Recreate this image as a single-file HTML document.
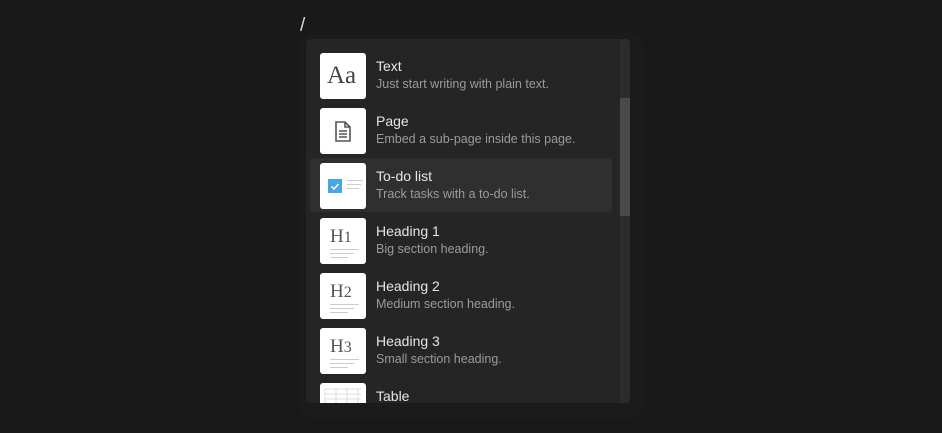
<!DOCTYPE html>
<html><head><style>
body{margin:0;width:942px;height:433px;background:#191919;font-family:"Liberation Sans",sans-serif;overflow:hidden;position:relative}
.slash{position:absolute;left:300px;top:15px;color:#d8d8d8;font-size:19px}
.glow{position:absolute;left:298px;top:33px;width:346px;height:386px;border-radius:16px;background:#1b1b1b}
.menu{position:absolute;left:306px;top:39px;width:324px;height:364px;background:#252525;border-radius:4px;overflow:hidden}
.track{position:absolute;right:0;top:0;width:10px;height:100%;background:#2c2c2c}
.thumb{position:absolute;right:0;top:59px;width:10px;height:118px;background:#4a4a4c}
.row{position:absolute;left:4px;width:302px;height:54px;border-radius:4px}
.row.hl{background:#2f2f2f}
.ic{position:absolute;left:10px;top:5px;width:46px;height:46px;background:#fff;border-radius:3px;overflow:hidden}
.t{position:absolute;left:66px;top:10px;color:#e6e6e6;font-size:14px}
.d{position:absolute;left:66px;top:29px;color:#9b9b9b;font-size:12.5px}
.h{position:absolute;left:10px;top:8px;font-family:"Liberation Serif",serif;font-size:19px;color:#555}
.l{position:absolute;left:10px;height:1px;background:#ccc}
</style></head><body>
<div class="slash">/</div>
<div class="glow"></div>
<div class="menu">
<div class="track"></div><div class="thumb"></div>
<div class="row" style="top:9px"><div class="ic"><div style="position:absolute;left:7px;top:9px;font-family:'Liberation Serif',serif;font-size:25px;color:#444">Aa</div></div><div class="t">Text</div><div class="d">Just start writing with plain text.</div></div>
<div class="row" style="top:64px"><div class="ic"><svg width="46" height="46" viewBox="0 0 46 46"><path d="M16 14h9l5 5v14H16z M25 14v5h5" fill="none" stroke="#555" stroke-width="1.6"/><path d="M19 23h8M19 26h8M19 29h8" stroke="#555" stroke-width="1.4"/></svg></div><div class="t">Page</div><div class="d">Embed a sub-page inside this page.</div></div>
<div class="row hl" style="top:119px"><div class="ic"><div style="position:absolute;left:8px;top:16px;width:14px;height:14px;background:#4aa5e0"></div><svg style="position:absolute;left:8px;top:16px" width="14" height="14"><path d="M3.5 7.5l2.5 2.5 4.5-5" fill="none" stroke="#fff" stroke-width="1.5"/></svg><div class="l" style="left:27px;top:17px;width:16px"></div><div class="l" style="left:27px;top:21px;width:14px"></div><div class="l" style="left:27px;top:25px;width:12px"></div></div><div class="t">To-do list</div><div class="d">Track tasks with a to-do list.</div></div>
<div class="row" style="top:174px"><div class="ic"><div class="h">H<span style="font-size:16px">1</span></div><div class="l" style="top:31px;width:29px"></div><div class="l" style="top:35px;width:24px"></div><div class="l" style="top:39px;width:18px"></div></div><div class="t">Heading 1</div><div class="d">Big section heading.</div></div>
<div class="row" style="top:229px"><div class="ic"><div class="h">H<span style="font-size:16px">2</span></div><div class="l" style="top:31px;width:29px"></div><div class="l" style="top:35px;width:24px"></div><div class="l" style="top:39px;width:18px"></div></div><div class="t">Heading 2</div><div class="d">Medium section heading.</div></div>
<div class="row" style="top:284px"><div class="ic"><div class="h">H<span style="font-size:16px">3</span></div><div class="l" style="top:31px;width:29px"></div><div class="l" style="top:35px;width:24px"></div><div class="l" style="top:39px;width:18px"></div></div><div class="t">Heading 3</div><div class="d">Small section heading.</div></div>
<div class="row" style="top:339px"><div class="ic"><svg width="46" height="46"><path d="M5 6h36M5 11h36M5 16h36M5 6v20M16 6v20M27 6v20M38 6v20" stroke="#ddd" fill="none"/></svg></div><div class="t">Table</div></div>
</div>
</body></html>
